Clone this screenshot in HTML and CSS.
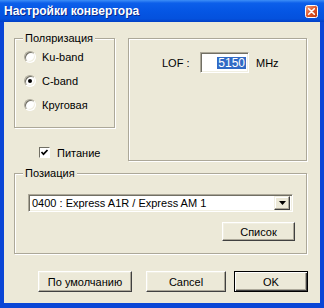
FILE: index.html
```html
<!DOCTYPE html>
<html lang="ru">
<head>
  <meta charset="UTF-8" />
  <title>Настройки конвертора</title>
  <link rel="stylesheet" href="styles.css">
</head>
<body>
  <div class="window">
    <div class="titlebar">
      <span class="title">Настройки конвертора</span>
      <svg class="close" width="13" height="13" viewBox="0 0 13 13">
        <defs>
          <linearGradient id="cg" x1="0" y1="0" x2="1" y2="1">
            <stop offset="0" stop-color="#f3a886" />
            <stop offset="0.5" stop-color="#e0582c" />
            <stop offset="1" stop-color="#b9360f" />
          </linearGradient>
        </defs>
        <rect x="0.5" y="0.5" width="12" height="12" rx="2" fill="url(#cg)" stroke="#fff" />
        <path d="M3.7 3.7l5.6 5.6M9.3 3.7l-5.6 5.6" stroke="#fff" stroke-width="1.6" stroke-linecap="round" />
      </svg>
    </div>

    <div class="client">
      <div class="top">
        <div class="left-col">
          <fieldset class="group pol">
            <legend>Поляризация</legend>
            <label class="radio"><span class="rb"></span>Ku-band</label>
            <label class="radio"><span class="rb on"></span>C-band</label>
            <label class="radio"><span class="rb"></span>Круговая</label>
          </fieldset>
          <label class="check">
            <span class="cb">
              <svg width="9" height="9" viewBox="0 0 9 9"><polyline points="1.5,4 3.5,6.2 7.5,2" fill="none" stroke="#000" stroke-width="1.7" /></svg>
            </span>
            Питание
          </label>
        </div>

        <div class="panel">
          <div class="lof">
            <span class="lof-label">LOF :</span>
            <span class="field lof-field"><span class="sel">5150</span></span>
            <span class="lof-unit">MHz</span>
          </div>
        </div>
      </div>

      <fieldset class="group pos">
        <legend>Позиация</legend>
        <div class="field combo">
          <span class="combo-text">0400 : Express A1R / Express AM 1</span>
          <span class="combo-btn">
            <svg width="7" height="4" viewBox="0 0 7 4"><polygon points="0,0 7,0 3.5,4" fill="#000" /></svg>
          </span>
        </div>
        <div class="list-row">
          <button class="btn b-list">Список</button>
        </div>
      </fieldset>

      <div class="buttons">
        <button class="btn b-def">По умолчанию</button>
        <button class="btn b-cancel">Cancel</button>
        <button class="btn b-ok">OK</button>
      </div>
    </div>
  </div>
</body>
</html>
```

FILE: styles.css
```css
body {
  margin: 0;
  font-family: "Liberation Sans", Arial, sans-serif;
  font-size: 11px;
  color: #000;
}

.window {
  width: 324px;
  height: 308px;
  box-sizing: border-box;
  display: flex;
  flex-direction: column;
  background: #0a46d6;
  padding: 0 4px 5px;
}

.titlebar {
  height: 22px;
  margin: 0 -4px;
  padding: 0 6px 0 4px;
  display: flex;
  align-items: center;
  justify-content: space-between;
  background: linear-gradient(to bottom, #3d8ef7 0%, #0c5fea 14%, #0556e4 50%, #0451dd 85%, #0340c6 100%);
}

.title {
  color: #fff;
  font-weight: bold;
  font-size: 12px;
  text-shadow: 1px 1px 0 #0b2a8c;
}

.client {
  flex: 1;
  background: #ece9d8;
  padding: 10px 13px 0 10px;
}

.top {
  display: flex;
  align-items: flex-start;
  gap: 13px;
}

.left-col {
  width: 101px;
  flex-shrink: 0;
}

.group {
  margin: 0;
  border: 1px solid #aca899;
  box-shadow: 1px 1px 0 #fff, inset 1px 1px 0 #fff;
}

.group legend {
  padding: 0 2px;
  line-height: 13px;
  background: #ece9d8;
}

.pol {
  padding: 0 0 10px 8px;
}

.radio {
  display: flex;
  align-items: center;
  gap: 6px;
  height: 24px;
}

.rb {
  position: relative;
  width: 10px;
  height: 10px;
  margin-left: 1px;
  border-radius: 50%;
  background: #fff;
  border: 1px solid;
  border-color: #aca899 #fff #fff #aca899;
  box-shadow: inset 1px 1px 0 #716f64, inset -1px -1px 0 #f1efe2;
}

.rb.on::after {
  content: "";
  position: absolute;
  left: 3px;
  top: 3px;
  width: 4px;
  height: 4px;
  border-radius: 50%;
  background: #000;
}

.check {
  display: flex;
  align-items: center;
  gap: 7px;
  height: 13px;
  margin: 18px 0 0 25px;
}

.cb {
  width: 9px;
  height: 9px;
  display: flex;
  background: #fff;
  border: 1px solid;
  border-color: #716f64 #fff #fff #716f64;
}

.panel {
  flex: 1;
  height: 123px;
  box-sizing: border-box;
  margin-top: 6px;
  padding: 13px 0 0 33px;
  border: 1px solid #aca899;
  box-shadow: 1px 1px 0 #fff, inset 1px 1px 0 #fff;
}

.lof {
  display: flex;
  align-items: center;
  height: 21px;
}

.lof-label {
  width: 38px;
}

.field {
  box-sizing: border-box;
  background: #fff;
  border: 1px solid;
  border-color: #aca899 #fff #fff #aca899;
  box-shadow: inset 1px 1px 0 #716f64, inset -1px -1px 0 #f1efe2;
}

.lof-field {
  width: 49px;
  height: 21px;
  display: flex;
  align-items: center;
  justify-content: flex-end;
  padding-right: 2px;
}

.sel {
  background: #316ac5;
  color: #fff;
  font-size: 12px;
  line-height: 12px;
  padding: 0 1px;
}

.lof-unit {
  margin-left: 7px;
}

.pos {
  margin-top: 6px;
  padding: 0 11px 12px 8px;
}

.combo {
  width: 265px;
  height: 18px;
  margin: 14px 0 0 5px;
  display: flex;
  align-items: center;
  justify-content: space-between;
  padding: 2px;
}

.combo-text {
  padding-left: 1px;
}

.combo-btn {
  width: 16px;
  height: 14px;
  box-sizing: border-box;
  display: flex;
  align-items: center;
  justify-content: center;
  background: #ece9d8;
  border: 1px solid;
  border-color: #f1efe2 #404040 #404040 #f1efe2;
  box-shadow: inset -1px -1px 0 #aca899, inset 1px 1px 0 #fff;
}

.list-row {
  display: flex;
  justify-content: flex-end;
  margin-top: 10px;
}

.btn {
  box-sizing: border-box;
  height: 21px;
  padding: 0;
  flex-shrink: 0;
  font-family: inherit;
  font-size: 11px;
  color: #000;
  background: #ece9d8;
  border: 1px solid;
  border-color: #fff #404040 #404040 #fff;
  box-shadow: inset -1px -1px 0 #aca899, inset 1px 1px 0 #f1efe2;
}

.b-list {
  width: 73px;
  height: 19px;
}

.buttons {
  display: flex;
  margin: 17px 0 0 24px;
}

.b-def {
  width: 94px;
}

.b-cancel {
  width: 80px;
  margin-left: 14px;
}

.b-ok {
  width: 74px;
  margin-left: 8px;
  border-color: #000;
  box-shadow: inset 1px 1px 0 #fff, inset -1px -1px 0 #404040, inset -2px -2px 0 #aca899;
}
```
